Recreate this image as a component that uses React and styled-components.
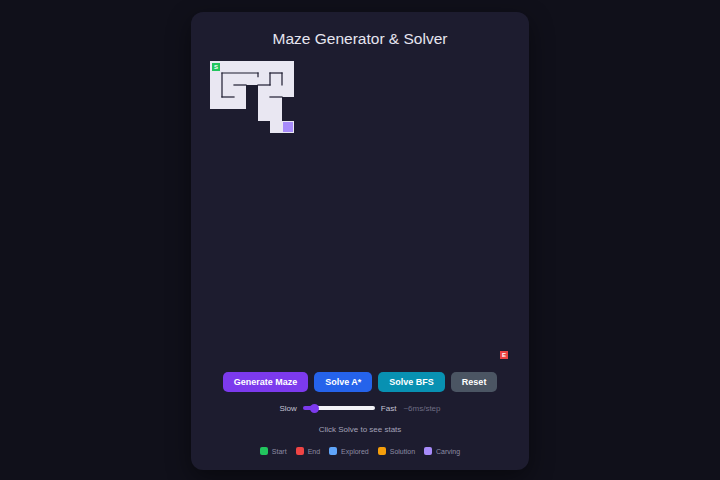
import React from 'react';
import styled, { createGlobalStyle } from 'styled-components';

const CELL = 12;
const SIZE = 25;

const carved = [
  [0, 0], [1, 0], [2, 0], [3, 0], [4, 0], [5, 0], [6, 0],
  [0, 1], [1, 1], [2, 1], [3, 1], [4, 1], [5, 1], [6, 1],
  [0, 2], [1, 2], [2, 2], [4, 2], [5, 2], [6, 2],
  [0, 3], [1, 3], [2, 3], [4, 3], [5, 3],
  [4, 4], [5, 4],
  [5, 5], [6, 5],
];

// wall segments in cell units: [x1, y1, x2, y2]
const walls = [
  [1, 1, 4, 1],
  [4, 1, 4, 1.3],
  [1, 1, 1, 3],
  [1, 3, 2, 3],
  [2, 2, 3, 2],
  [4, 2, 5, 2],
  [5, 1, 5, 2],
  [5, 1, 6, 1],
  [6, 1, 6, 2],
  [5, 3, 6, 3],
];

const legend = [
  { label: 'Start', color: '#22c55e' },
  { label: 'End', color: '#ef4444' },
  { label: 'Explored', color: '#60a5fa' },
  { label: 'Solution', color: '#f59e0b' },
  { label: 'Carving', color: '#a78bfa' },
];

const Maze = () => (
  <MazeSvg width={CELL * SIZE} height={CELL * SIZE} viewBox={`0 0 ${CELL * SIZE} ${CELL * SIZE}`}>
    {carved.map(([x, y]) => (
      <rect key={`${x}-${y}`} x={x * CELL} y={y * CELL} width={CELL} height={CELL} fill="#e9e7f2" />
    ))}
    {walls.map(([x1, y1, x2, y2], i) => (
      <line
        key={i}
        x1={x1 * CELL}
        y1={y1 * CELL}
        x2={x2 * CELL}
        y2={y2 * CELL}
        stroke="#1d1c2f"
        strokeWidth="1.2"
        strokeLinecap="square"
      />
    ))}
    <rect x={6 * CELL + 1} y={5 * CELL + 1} width={10} height={10} fill="#a78bfa" />
    <rect x={2} y={2} width={8} height={8} fill="#22c55e" />
    <text x={6} y={8.2} fontSize="6" fill="#fff" textAnchor="middle" fontFamily="'Liberation Sans', sans-serif" fontWeight="700">S</text>
    <rect x={24 * CELL + 2} y={24 * CELL + 2} width={8} height={8} fill="#ef4444" />
    <text x={24 * CELL + 6} y={24 * CELL + 8.2} fontSize="6" fill="#fff" textAnchor="middle" fontFamily="'Liberation Sans', sans-serif" fontWeight="700">E</text>
  </MazeSvg>
);

const App = () => {
  return (
    <>
      <GlobalStyle />
      <Page>
        <Card>
          <Title>Maze Generator &amp; Solver</Title>
          <Maze />
          <Buttons>
            <Button $bg="#7c3aed">Generate Maze</Button>
            <Button $bg="#2563eb">Solve A*</Button>
            <Button $bg="#0891b2">Solve BFS</Button>
            <Button $bg="#4b5563">Reset</Button>
          </Buttons>
          <SpeedRow>
            <span>Slow</span>
            <Range type="range" min="0" max="100" defaultValue="12" readOnly />
            <span>Fast</span>
            <Hint>~6ms/step</Hint>
          </SpeedRow>
          <Stats>Click Solve to see stats</Stats>
          <Legend>
            {legend.map((item) => (
              <LegendItem key={item.label}>
                <Swatch $color={item.color} />
                {item.label}
              </LegendItem>
            ))}
          </Legend>
        </Card>
      </Page>
    </>
  );
};

const GlobalStyle = createGlobalStyle`
  html, body {
    margin: 0;
    background: #10101a;
    font-family: "Liberation Sans", Arial, sans-serif;
  }
`;

const Page = styled.div`
  width: 720px;
  height: 480px;
  display: flex;
  justify-content: center;
  align-items: flex-start;
  padding-top: 12px;
  box-sizing: border-box;
`;

const Card = styled.div`
  width: 338px;
  box-sizing: border-box;
  padding: 17px 19px 14px;
  background: #1d1c2f;
  border-radius: 12px;
  box-shadow: 0 8px 24px rgba(0, 0, 0, 0.45);
  display: flex;
  flex-direction: column;
  align-items: center;
`;

const Title = styled.h1`
  margin: 0 0 12px;
  font-size: 15.5px;
  line-height: 20px;
  font-weight: 400;
  color: #e6e5f0;
`;

const MazeSvg = styled.svg`
  display: block;
`;

const Buttons = styled.div`
  display: flex;
  gap: 6px;
  margin-top: 11px;
`;

const Button = styled.button`
  height: 20px;
  padding: 0 11px;
  border: none;
  border-radius: 5px;
  background: ${(p) => p.$bg};
  color: #fff;
  font-family: "Liberation Sans", Arial, sans-serif;
  font-size: 9px;
  font-weight: 700;
  cursor: pointer;
`;

const SpeedRow = styled.div`
  display: flex;
  align-items: center;
  gap: 6px;
  height: 14px;
  margin-top: 9px;
  font-size: 8px;
  color: #c4c3d4;
`;

const Hint = styled.span`
  margin-left: 1px;
  color: #6e6d84;
  font-size: 8px;
`;

const Range = styled.input`
  -webkit-appearance: none;
  appearance: none;
  width: 72px;
  height: 4px;
  margin: 0;
  border-radius: 2px;
  background: linear-gradient(to right, #7c3aed 0 12%, #f2f2f7 12% 100%);
  outline: none;

  &::-webkit-slider-thumb {
    -webkit-appearance: none;
    width: 9px;
    height: 9px;
    border-radius: 50%;
    background: #7c3aed;
    border: none;
  }
`;

const Stats = styled.div`
  margin-top: 9px;
  height: 12px;
  line-height: 12px;
  font-size: 8px;
  color: #a3a2b8;
`;

const Legend = styled.div`
  display: flex;
  gap: 9px;
  margin-top: 10px;
  height: 10px;
  align-items: center;
`;

const LegendItem = styled.div`
  display: flex;
  align-items: center;
  gap: 4px;
  font-size: 7px;
  color: #8d8ca3;
`;

const Swatch = styled.span`
  width: 8px;
  height: 8px;
  border-radius: 2px;
  background: ${(p) => p.$color};
`;

export default App;
